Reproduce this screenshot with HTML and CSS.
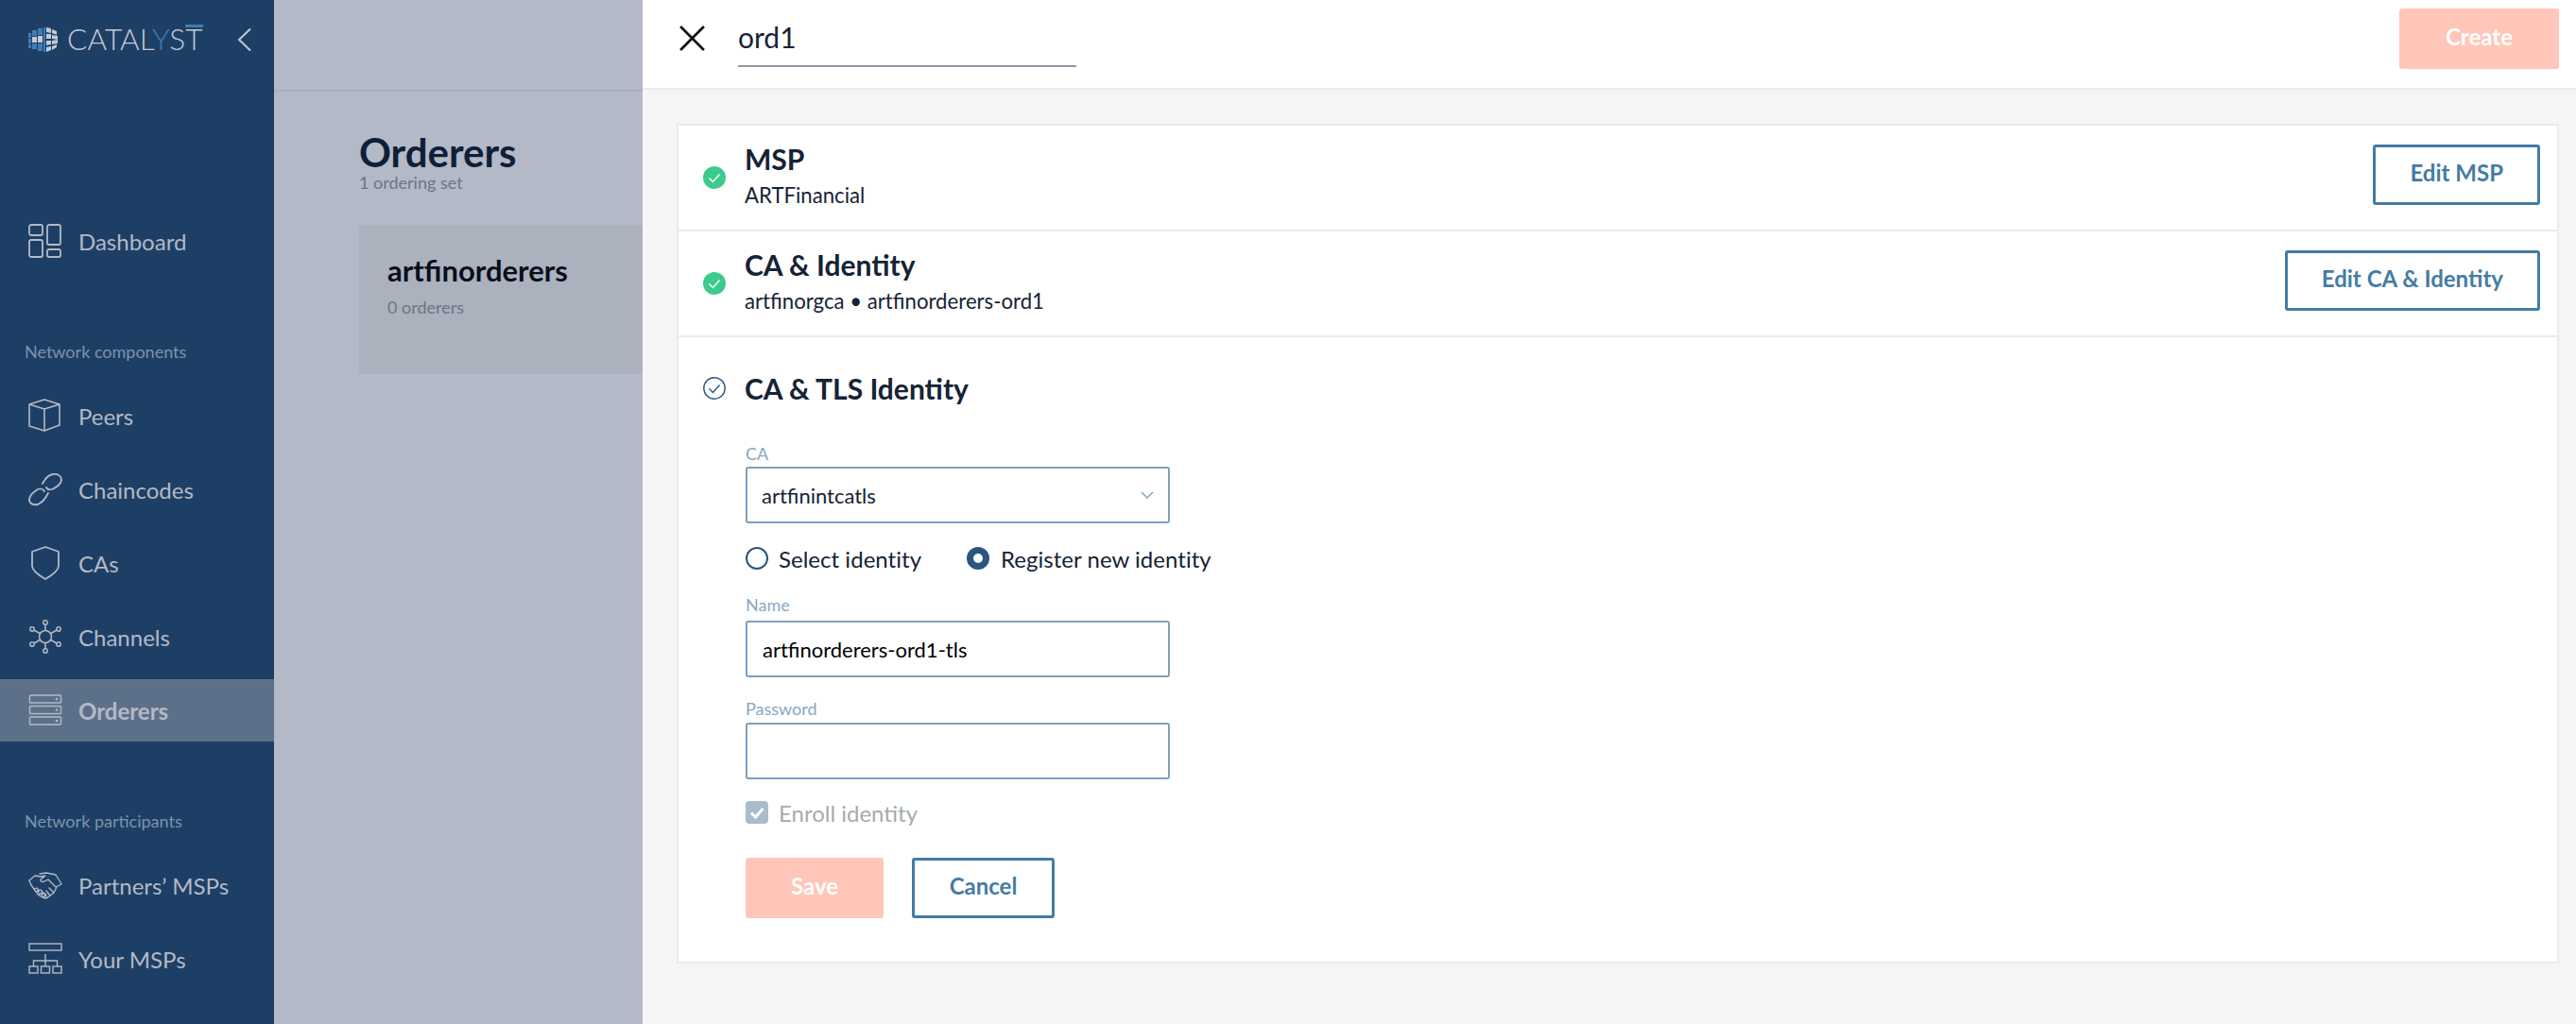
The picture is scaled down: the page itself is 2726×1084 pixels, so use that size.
FILE: index.html
```html
<!DOCTYPE html>
<html lang="en">
<head>
<meta charset="utf-8">
<title>Catalyst - Orderers</title>
<link rel="stylesheet" href="styles.css">
</head>
<body>
<div class="app">
  <aside class="sidebar">
    <div class="brand">
      <svg class="brand-mark" viewBox="0 0 32 28" width="32" height="28">
        <g fill="#3f7cb3">
          <rect x="0" y="7" width="3" height="5"/><rect x="0" y="13" width="3" height="5"/><rect x="0" y="19" width="3" height="4"/>
          <rect x="4" y="4" width="5" height="6"/><rect x="4" y="18" width="5" height="6"/>
          <rect x="10" y="2" width="5" height="7"/><rect x="10" y="18" width="5" height="8"/>
          <rect x="16" y="1" width="2" height="26"/>
        </g>
        <g fill="#c4cbd6">
          <rect x="4" y="11" width="5" height="6"/><rect x="10" y="10" width="5" height="7"/>
          <path d="M19 1l5 1v5l-5-1zM25 3l5 2v4l-5-2zM19 8l5 0v5h-5zM25 9l6 1v4l-6-1zM19 15h5v4l-5 1zM25 15l6-1v4l-6 1zM19 22l5-1v4l-5 2zM25 21l5-2v3l-5 3z"/>
        </g>
      </svg>
      <span class="brand-name">CATAL<span class="brand-y">Y</span>S<span class="brand-t">T</span></span>
      <svg class="collapse" viewBox="0 0 16 26" width="16" height="26"><path d="M14 1.5 2 13l12 11.5" fill="none" stroke="#c3c9d3" stroke-width="2"/></svg>
    </div>
    <nav class="nav">
      <a class="nav-item">
        <svg class="nav-icon" viewBox="0 0 36 36"><g fill="none" stroke="currentColor" stroke-width="1.8"><rect x="1" y="1" width="14" height="11" rx="2"/><rect x="20" y="1" width="14" height="21" rx="2"/><rect x="1" y="17" width="14" height="18" rx="2"/><rect x="20" y="27" width="14" height="8" rx="2"/></g></svg>
        <span>Dashboard</span>
      </a>
      <div class="nav-label">Network components</div>
      <a class="nav-item">
        <svg class="nav-icon" viewBox="0 0 36 36"><g fill="none" stroke="currentColor" stroke-width="1.6" stroke-linejoin="round"><path d="M17 1 33 6v22l-16 6-16-5V6z"/><path d="M1 6l16 5 16-5M17 11v23"/></g></svg>
        <span>Peers</span>
      </a>
      <a class="nav-item">
        <svg class="nav-icon" viewBox="0 0 36 36"><g fill="none" stroke="currentColor" stroke-width="1.8" stroke-linecap="round"><path d="M15 12c2-4 6-9 11-10 5-1 9 2 9 6s-5 8-10 10c-3 1-5 0-6-2"/><path d="M21 22c-2 4-6 10-11 12-5 1-9-1-9-5s4-8 9-11c3-1 6 0 7 2"/></g></svg>
        <span>Chaincodes</span>
      </a>
      <a class="nav-item">
        <svg class="nav-icon" viewBox="0 0 36 36"><path d="M18 1l14 5v15c0 5-7 10-14 14C11 31 4 26 4 21V6z" fill="none" stroke="currentColor" stroke-width="1.8" stroke-linejoin="round"/></svg>
        <span>CAs</span>
      </a>
      <a class="nav-item">
        <svg class="nav-icon" viewBox="0 0 36 36"><g fill="none" stroke="currentColor" stroke-width="1.5"><circle cx="18" cy="18" r="6.5"/><circle cx="18" cy="3" r="2.2"/><circle cx="18" cy="33" r="2.2"/><circle cx="4" cy="10" r="2.2"/><circle cx="32" cy="10" r="2.2"/><circle cx="4" cy="26" r="2.2"/><circle cx="32" cy="26" r="2.2"/><path d="M18 5v7M18 24v7M6 11l7 4M30 11l-7 4M6 25l7-4M30 25l-7-4"/></g></svg>
        <span>Channels</span>
      </a>
      <a class="nav-item active">
        <svg class="nav-icon" viewBox="0 0 36 36"><g fill="none" stroke="currentColor" stroke-width="1.4"><rect x="1.5" y="2" width="33" height="8" rx="1"/><rect x="1.5" y="13.5" width="33" height="8" rx="1"/><rect x="1.5" y="25" width="33" height="8" rx="1"/></g><g fill="currentColor"><circle cx="30" cy="6" r="1.3"/><circle cx="30" cy="17.5" r="1.3"/><circle cx="30" cy="29" r="1.3"/></g></svg>
        <span>Orderers</span>
      </a>
      <div class="nav-label">Network participants</div>
      <a class="nav-item">
        <svg class="nav-icon" viewBox="0 0 36 36"><g fill="none" stroke="currentColor" stroke-width="1.3" stroke-linejoin="round" stroke-linecap="round"><path d="M1 13l6-5 6 1 5-1-5 4c-1 2 2 3 4 2l4-2 8 8 6-3-1-2-5-8-5-1-5-1-7 1"/><path d="M1 13l2 5 3 4"/><path d="M30 20l-3 6-8 6-4-1-5-3-4-6"/><path d="M6 22l3-1 2 2-3 2zM10 25l3-2 2 2-3 3zM14 28l2-2 3 2-3 3zM22 21l5 5M19 24l4 5M16 26l3 4"/></g></svg>
        <span>Partners’ MSPs</span>
      </a>
      <a class="nav-item">
        <svg class="nav-icon" viewBox="0 0 36 36"><g fill="none" stroke="currentColor" stroke-width="1.4"><rect x="1" y="2" width="34" height="7"/><rect x="1" y="26" width="9" height="7"/><rect x="13.5" y="26" width="9" height="7"/><rect x="26" y="26" width="9" height="7"/><path d="M18 13v13M5.500 26v-6h25v6"/></g></svg>
        <span>Your MSPs</span>
      </a>
    </nav>
  </aside>

  <main class="backdrop">
    <div class="backdrop-top"></div>
    <div class="backdrop-body">
      <h1 class="page-title">Orderers</h1>
      <p class="page-sub">1 ordering set</p>
      <div class="set-card">
        <div class="set-name">artfinorderers</div>
        <div class="set-sub">0 orderers</div>
      </div>
    </div>
  </main>

  <section class="panel">
    <header class="panel-head">
      <svg class="close" viewBox="0 0 28 26" width="29" height="27"><path d="M2 1l24 24M26 1 2 25" stroke="#111" stroke-width="2.600" fill="none"/></svg>
      <input class="name-input" type="text" value="ord1">
      <button class="btn btn-primary btn-create">Create</button>
    </header>
    <div class="panel-body">
      <div class="steps">
        <div class="step">
          <svg class="status" viewBox="0 0 24 24"><circle cx="12" cy="12" r="12" fill="#3ccb8c"/><path d="M6.500 12.500l4 4 7-8" fill="none" stroke="#fff" stroke-width="1.400"/></svg>
          <div class="step-text">
            <div class="step-title">MSP</div>
            <div class="step-sub">ARTFinancial</div>
          </div>
          <button class="btn btn-outline btn-edit">Edit MSP</button>
        </div>
        <div class="step">
          <svg class="status" viewBox="0 0 24 24"><circle cx="12" cy="12" r="12" fill="#3ccb8c"/><path d="M6.500 12.500l4 4 7-8" fill="none" stroke="#fff" stroke-width="1.400"/></svg>
          <div class="step-text">
            <div class="step-title">CA &amp; Identity</div>
            <div class="step-sub">artfinorgca • artfinorderers-ord1</div>
          </div>
          <button class="btn btn-outline btn-edit">Edit CA &amp; Identity</button>
        </div>
        <div class="step-open">
          <div class="open-head">
            <svg class="status" viewBox="0 0 24 24"><circle cx="12" cy="12" r="11.200" fill="none" stroke="#2a5680" stroke-width="1.400"/><path d="M6.500 12.500l4 4 7-8" fill="none" stroke="#2a5680" stroke-width="1.400"/></svg>
            <div class="step-title">CA &amp; TLS Identity</div>
          </div>
          <form class="form">
            <label class="field-label first">CA</label>
            <div class="select">
              <span>artfinintcatls</span>
              <svg viewBox="0 0 14 8" width="14" height="8"><path d="M1 1l6 6 6-6" fill="none" stroke="#7f9fbd" stroke-width="1.400"/></svg>
            </div>
            <div class="radios">
              <span class="radio"></span><span class="radio-text">Select identity</span>
              <span class="radio checked"></span><span class="radio-text">Register new identity</span>
            </div>
            <label class="field-label name">Name</label>
            <input class="text-input" type="text" value="artfinorderers-ord1-tls">
            <label class="field-label pw">Password</label>
            <input class="text-input" type="password">
            <div class="enroll">
              <svg class="checkbox" viewBox="0 0 24 24"><rect width="24" height="24" rx="4" fill="#a9bccd"/><path d="M6 12.500l4.500 4.500 8-9" fill="none" stroke="#fff" stroke-width="3"/></svg>
              <span class="enroll-text">Enroll identity</span>
            </div>
            <div class="actions">
              <button type="button" class="btn btn-primary btn-save">Save</button>
              <button type="button" class="btn btn-outline btn-cancel">Cancel</button>
            </div>
          </form>
        </div>
      </div>
    </div>
  </section>
</div>
</body>
</html>
```

FILE: styles.css
```css
* { box-sizing: border-box; }
html, body { margin: 0; height: 100%; }
body { font-family: Lato, "Open Sans", sans-serif; overflow: hidden; }
.app { display: flex; height: 1084px; width: 2726px; }

/* sidebar */
.sidebar { width: 290px; flex: none; background: #1e3f65; color: #b3b9c6; }
.brand { height: 222px; padding: 26px 23px 0 30px; display: flex; align-items: flex-start; }
.brand-mark { flex: none; margin-top: 2px; }
.brand-name { margin-left: 9px; font-size: 31.5px; font-weight: 300; line-height: 30px; color: #c3c9d3; letter-spacing: 0.1px; }
.brand-y { color: #3f7cb3; }
.brand-t { border-top: 3px solid #3f7cb3; display: inline-block; line-height: 24px; }
.collapse { margin-left: auto; margin-top: 3px; }
.nav { display: flex; flex-direction: column; gap: 12px; }
.nav-item { height: 66px; display: flex; align-items: center; padding-left: 30px; font-size: 24px; }
.nav-item.active { background: #5d7089; font-weight: 700; }
.nav-icon { width: 36px; height: 36px; flex: none; margin-right: 17px; }
.nav-label { font-size: 18px; line-height: 24px; color: #7d92ac; padding-left: 26px; margin-top: 60px; margin-bottom: 11px; }

/* dimmed page */
.backdrop { width: 390px; flex: none; background: #b3b9c6; overflow: hidden; }
.backdrop-top { height: 97px; border-bottom: 2px solid #a0b0c6; }
.backdrop-body { padding: 41px 0 0 90px; }
.page-title { margin: 0; font-size: 42px; line-height: 46px; font-weight: 700; color: #0f2036; }
.page-sub { margin: 0; font-size: 18px; line-height: 18px; color: #6b7685; }
.set-card { width: 400px; height: 157px; margin-top: 37px; padding: 29px 30px; background: #abb1bd; }
.set-name { font-size: 31px; line-height: 36px; font-weight: 700; color: #080f1c; }
.set-sub { margin-top: 10px; font-size: 18px; line-height: 22px; color: #6b7685; }

/* side panel */
.panel { flex: 1; background: #f5f5f5; display: flex; flex-direction: column; min-width: 0; }
.panel-head { height: 95px; flex: none; display: flex; align-items: flex-start; background: #fff; border-bottom: 2px solid #ebebeb; padding: 9px 18px 0 38px; }
.close { flex: none; margin-top: 18px; }
.name-input { width: 358px; height: 62px; margin-left: 34px; padding: 0; border: 0; border-bottom: 2px solid #8f9aa5; background: none; font: 30px Lato, sans-serif; color: #152335; outline: 0; }
.panel-body { padding: 36px 18px 0 36px; }
.steps { background: #fff; border: 2px solid #ebebeb; height: 889px; }
.step { height: 112px; border-bottom: 2px solid #ebebeb; display: flex; align-items: center; padding: 0 18px 0 26px; }
.status { width: 24px; height: 24px; flex: none; }
.step-text { flex: 1; margin-left: 20px; }
.step-title { font-size: 30px; line-height: 38px; font-weight: 700; color: #152335; }
.step-sub { font-size: 22.2px; line-height: 40px; color: #152335; }
.step-open { padding: 35px 0 0 26px; }
.open-head { display: flex; align-items: center; gap: 20px; }
.form { margin-left: 45px; width: 500px; display: flex; flex-direction: column; align-items: flex-start; }
.field-label { font-size: 18px; line-height: 24px; color: #88a7c4; margin-top: 20px; margin-bottom: 2px; }
.field-label.first { margin-top: 38px; }
.field-label.name { margin-top: 22px; margin-bottom: 5px; }
.field-label.pw { margin-top: 21px; margin-bottom: 3px; }
.select, .text-input { width: 449px; height: 60px; border: 2px solid #7f9fbd; border-radius: 3px; background: #fff; }
.select { display: flex; align-items: center; justify-content: space-between; padding: 0 15px; font-size: 22px; color: #152335; }
.text-input { padding: 0 16px; font: 22px Lato, sans-serif; color: #000; outline: 0; }
.radios { display: flex; align-items: center; height: 30px; margin-top: 22px; font-size: 24px; color: #152335; white-space: nowrap; }
.radio { width: 24px; height: 24px; border: 2px solid #2a5680; border-radius: 50%; margin-right: 11px; flex: none; }
.radio.checked { border: 7px solid #2a5680; margin-right: 12px; }
.radio-text { margin-right: 48px; letter-spacing: 0.03px; }
.enroll { display: flex; align-items: center; height: 30px; margin-top: 20px; }
.checkbox { width: 24px; height: 24px; margin-right: 11px; }
.enroll-text { font-size: 24px; color: #a5abb1; }
.actions { display: flex; gap: 30px; margin-top: 33px; }

/* buttons */
.btn { font: 700 24px Lato, sans-serif; height: 64px; border-radius: 3px; padding: 0 0 5px; }
.btn-primary { background: #ffc6b9; color: #fff; border: 0; }
.btn-outline { background: #fff; color: #447ca3; border: 3px solid #447ca3; padding: 0 36px 5px; flex: none; }
.btn-edit { margin-top: -6px; }
.btn-create { width: 169px; margin-left: auto; }
.btn-save { width: 146px; }
.btn-cancel { width: 151px; padding: 0 0 5px; }
```
